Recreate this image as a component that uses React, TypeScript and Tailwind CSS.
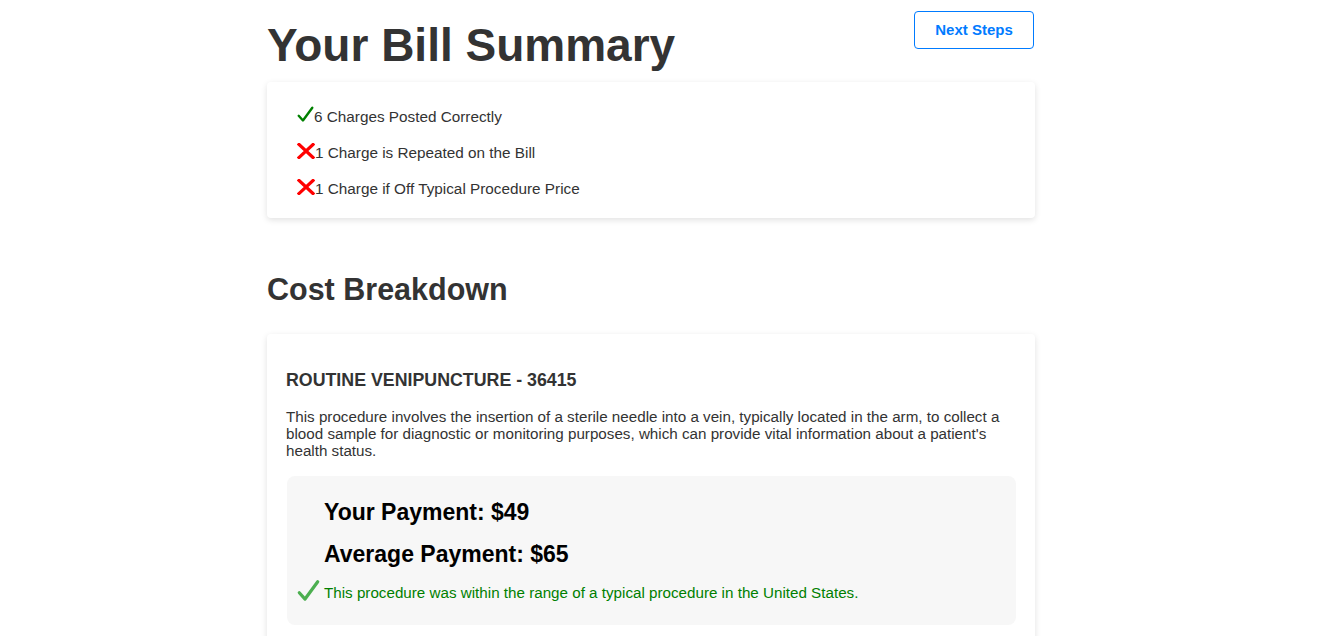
const Check = ({ className }: { className: string }) => (
  <svg viewBox="0 0 20 20" className={className} fill="none">
    <path d="M2 11.5 L7 17 L18 2" stroke="currentColor" strokeWidth="2.8" strokeLinecap="round" strokeLinejoin="round" />
  </svg>
);

const Cross = () => (
  <svg viewBox="0 0 18 16" className="h-[16px] w-[18px] text-[#ff0000]" fill="none">
    <path d="M2 1.5 L16 14.5 M16 1.5 L2 14.5" stroke="currentColor" strokeWidth="3.2" strokeLinecap="square" />
  </svg>
);

const summary = [
  { ok: true, text: "6 Charges Posted Correctly" },
  { ok: false, text: "1 Charge is Repeated on the Bill" },
  { ok: false, text: "1 Charge if Off Typical Procedure Price" },
];

const App = () => {
  return (
    <div className="min-h-screen bg-white pl-[267px] font-['Liberation_Sans',Arial,sans-serif] text-[#333]">
      <div className="w-[768px]">
        <div className="flex items-start justify-between pt-[11px]">
          <h1 className="mt-[7px] text-[46px] font-bold leading-[55px]">Your Bill Summary</h1>
          <button className="mr-[1px] h-[38px] w-[120px] rounded-[4px] border border-[#007bff] text-[15px] font-bold text-[#007bff]">
            Next Steps
          </button>
        </div>

        <div className="mt-[9px] rounded-[4px] bg-white pt-[25px] pb-[19px] pl-[30px] shadow-[0_2px_6px_rgba(0,0,0,0.12)]">
          <ul className="flex flex-col gap-4">
            {summary.map((s) => (
              <li key={s.text} className="flex h-5 items-center text-[15.3px]">
                {s.ok ? (
                  <Check className="mb-[6px] h-[19px] w-[17px] text-[#008000]" />
                ) : (
                  <span className="mb-[4px]">
                    <Cross />
                  </span>
                )}
                <span>{s.text}</span>
              </li>
            ))}
          </ul>
        </div>

        <h2 className="mt-[53px] text-[30.5px] font-bold leading-[37px]">Cost Breakdown</h2>

        <div className="mt-[26px] rounded-[4px] bg-white px-[19px] pt-[37px] pb-[20px] shadow-[0_2px_6px_rgba(0,0,0,0.12)]">
          <h3 className="text-[17.8px] font-bold leading-[18px]">ROUTINE VENIPUNCTURE - 36415</h3>
          <p className="mt-[19px] text-[15.2px] leading-[17px]">
            This procedure involves the insertion of a sterile needle into a vein, typically located in the arm, to collect a
            blood sample for diagnostic or monitoring purposes, which can provide vital information about a patient's
            health status.
          </p>
          <div className="mt-[17px] ml-px rounded-[8px] bg-[#f7f7f7] pt-[22px] pb-[21px] pl-[10px]">
            <div className="flex flex-col gap-[14px] pl-[27px] text-[23px] font-bold leading-[28px] text-black">
              <h4>Your Payment: $49</h4>
              <h4>Average Payment: $65</h4>
            </div>
            <div className="mt-[12px] flex h-6 items-center gap-[4px]">
              <Check className="mb-[3px] h-[26px] w-[23px] text-[#4caf50]" />
              <span className="mt-[2px] text-[15.2px] text-[#008000]">
                This procedure was within the range of a typical procedure in the United States.
              </span>
            </div>
          </div>
        </div>
      </div>
    </div>
  );
};

export default App;
